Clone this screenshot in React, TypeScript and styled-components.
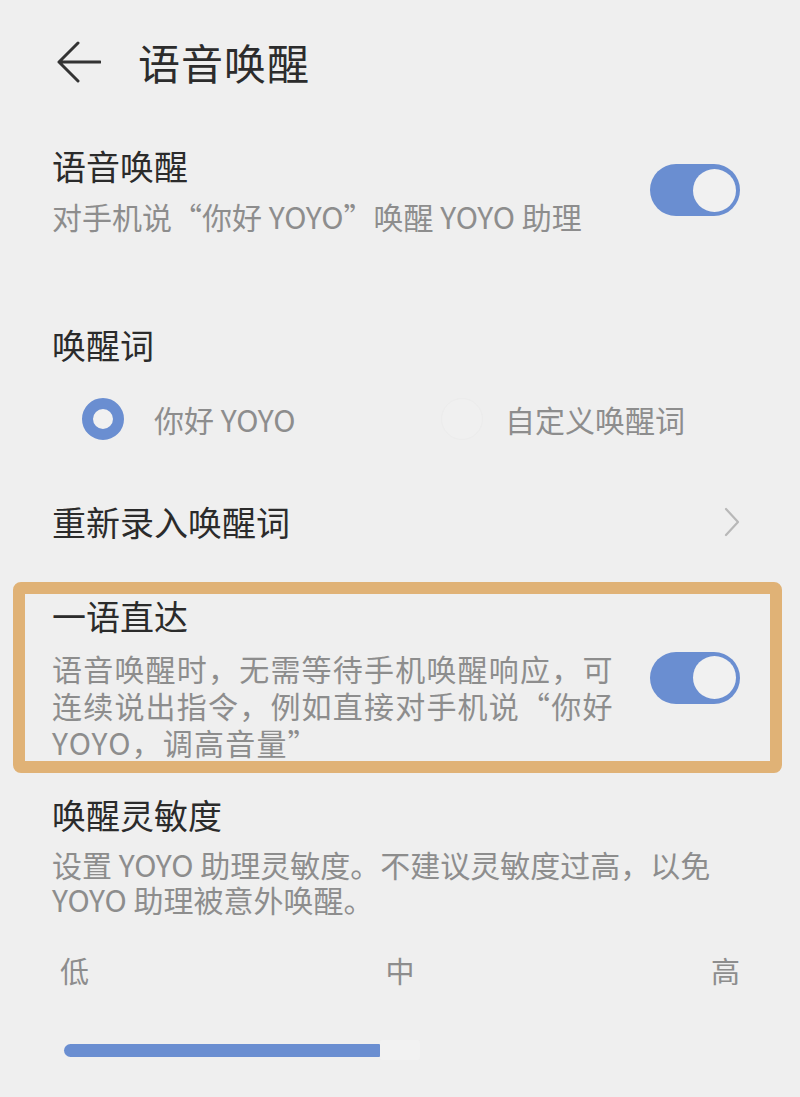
import React from "react";
import styled, { createGlobalStyle } from "styled-components";

const GlobalStyle = createGlobalStyle`
  html, body {
    margin: 0;
    padding: 0;
    background: #efefef;
  }
  body {
    font-family: "Noto Sans CJK SC", "Noto Sans", sans-serif;
    -webkit-font-smoothing: antialiased;
  }
`;

const Page = styled.div`
  min-height: 1097px;
  background: #efefef;
  padding: 0 60px 0 52px;
  box-sizing: border-box;
  display: flex;
  flex-direction: column;
  overflow: hidden;
`;

const Header = styled.header`
  height: 124px;
  display: flex;
  align-items: center;
  gap: 37px;
  padding-left: 5px;
`;

const HeaderTitle = styled.h1`
  margin: 0;
  font-size: 42px;
  line-height: 50px;
  font-weight: 400;
  color: #2c2c2c;
  letter-spacing: 1px;
`;

const Row = styled.div<{ $top?: number }>`
  display: flex;
  align-items: center;
  justify-content: space-between;
  gap: 24px;
  margin-top: ${(p) => p.$top ?? 0}px;
`;

const TextCol = styled.div`
  display: flex;
  flex-direction: column;
  min-width: 0;
`;

const Title = styled.div`
  font-size: 34px;
  line-height: 44px;
  color: #2b2b2b;
  font-weight: 400;
  white-space: nowrap;
`;

const Desc = styled.div<{ $lh?: number; $gap?: number; $spacing?: number }>`
  margin-top: ${(p) => p.$gap ?? 8}px;
  font-size: 30px;
  line-height: ${(p) => p.$lh ?? 40}px;
  letter-spacing: ${(p) => p.$spacing ?? 0}px;
  color: #8d8d8d;
  font-weight: 400;
  white-space: nowrap;
`;

const Track = styled.div<{ $on: boolean }>`
  flex: none;
  width: 90px;
  height: 52px;
  border-radius: 26px;
  box-sizing: border-box;
  padding: 0 4px;
  display: flex;
  align-items: center;
  justify-content: ${(p) => (p.$on ? "flex-end" : "flex-start")};
  background: ${(p) => (p.$on ? "#6a8ed1" : "#cfcfcf")};
`;

const Knob = styled.div`
  width: 43px;
  height: 43px;
  border-radius: 50%;
  background: #f1f1f1;
`;

const Toggle = ({ on }: { on: boolean }) => (
  <Track $on={on}>
    <Knob />
  </Track>
);

const RadioGroup = styled.div`
  margin-top: 22px;
  height: 60px;
  display: grid;
  grid-template-columns: 359px 1fr;
  align-items: center;
  padding-left: 30px;
`;

const RadioOption = styled.div<{ $gap: number }>`
  display: flex;
  align-items: center;
  gap: ${(p) => p.$gap}px;
`;

const RadioDot = styled.div<{ $checked: boolean }>`
  width: 42px;
  height: 42px;
  border-radius: 50%;
  box-sizing: border-box;
  border: ${(p) => (p.$checked ? "11px solid #6a8ed1" : "1px solid #ececec")};
  background: ${(p) => (p.$checked ? "#f1f1f1" : "#f0f0f0")};
`;

const RadioLabel = styled.span`
  font-size: 30px;
  line-height: 40px;
  color: #8d8d8d;
`;

const Chevron = () => (
  <svg width="16" height="30" viewBox="0 0 16 30" fill="none">
    <path d="M2 2 L14 15 L2 28" stroke="#b8b8b8" strokeWidth="2.2" strokeLinecap="round" strokeLinejoin="round" />
  </svg>
);

const BackArrow = () => (
  <svg width="44" height="42" viewBox="0 0 44 42" fill="none">
    <path d="M21 2 L2 21 L21 40 M2 21 H43" stroke="#333" strokeWidth="3" strokeLinecap="round" strokeLinejoin="round" />
  </svg>
);

const Highlight = styled.div`
  margin: 38px -42px 0 -39px;
  border: 12px solid #e0b276;
  border-radius: 8px;
  padding: 0 30px 0 27px;
  display: flex;
  align-items: center;
  justify-content: space-between;
  gap: 20px;
`;

const Section = styled.div<{ $top: number }>`
  margin-top: ${(p) => p.$top}px;
  display: flex;
  flex-direction: column;
`;

const Scale = styled.div`
  margin-top: 33px;
  display: flex;
  justify-content: space-between;
  padding-left: 8px;
  font-size: 29px;
  line-height: 40px;
  color: #8d8d8d;
`;

const SliderTrack = styled.div`
  margin-top: 50px;
  margin-left: 12px;
  display: flex;
  align-items: center;
  height: 20px;
`;

const SliderFill = styled.div`
  height: 13px;
  background: #6a8ed1;
  border-radius: 7px 1px 1px 7px;
`;

const SliderThumb = styled.div`
  width: 40px;
  height: 20px;
  background: #f2f2f2;
  border-radius: 3px;
`;

export default function App() {
  const sensitivity = 0.465;
  return (
    <>
      <GlobalStyle />
      <Page>
        <Header>
          <BackArrow />
          <HeaderTitle>语音唤醒</HeaderTitle>
        </Header>

        <Row $top={20}>
          <TextCol>
            <Title>语音唤醒</Title>
            <Desc>对手机说“你好 YOYO”唤醒 YOYO 助理</Desc>
          </TextCol>
          <Toggle on />
        </Row>

        <Section $top={87}>
          <Title>唤醒词</Title>
          <RadioGroup>
            <RadioOption $gap={30}>
              <RadioDot $checked />
              <RadioLabel>你好 YOYO</RadioLabel>
            </RadioOption>
            <RadioOption $gap={22}>
              <RadioDot $checked={false} />
              <RadioLabel>自定义唤醒词</RadioLabel>
            </RadioOption>
          </RadioGroup>
        </Section>

        <Row $top={51}>
          <Title>重新录入唤醒词</Title>
          <Chevron />
        </Row>

        <Highlight>
          <TextCol>
            <Title>一语直达</Title>
            <Desc $lh={37} $gap={12} $spacing={1.2}>
              语音唤醒时，无需等待手机唤醒响应，可
              <br />
              连续说出指令，例如直接对手机说“你好
              <br />
              YOYO，调高音量”
            </Desc>
          </TextCol>
          <Toggle on />
        </Highlight>

        <Section $top={20}>
          <Title>唤醒灵敏度</Title>
          <Desc $lh={35} $gap={10}>
            设置 YOYO 助理灵敏度。不建议灵敏度过高，以免
            <br />
            YOYO 助理被意外唤醒。
          </Desc>
          <Scale>
            <span>低</span>
            <span>中</span>
            <span>高</span>
          </Scale>
          <SliderTrack>
            <SliderFill style={{ width: `${sensitivity * 680}px` }} />
            <SliderThumb />
          </SliderTrack>
        </Section>
      </Page>
    </>
  );
}
